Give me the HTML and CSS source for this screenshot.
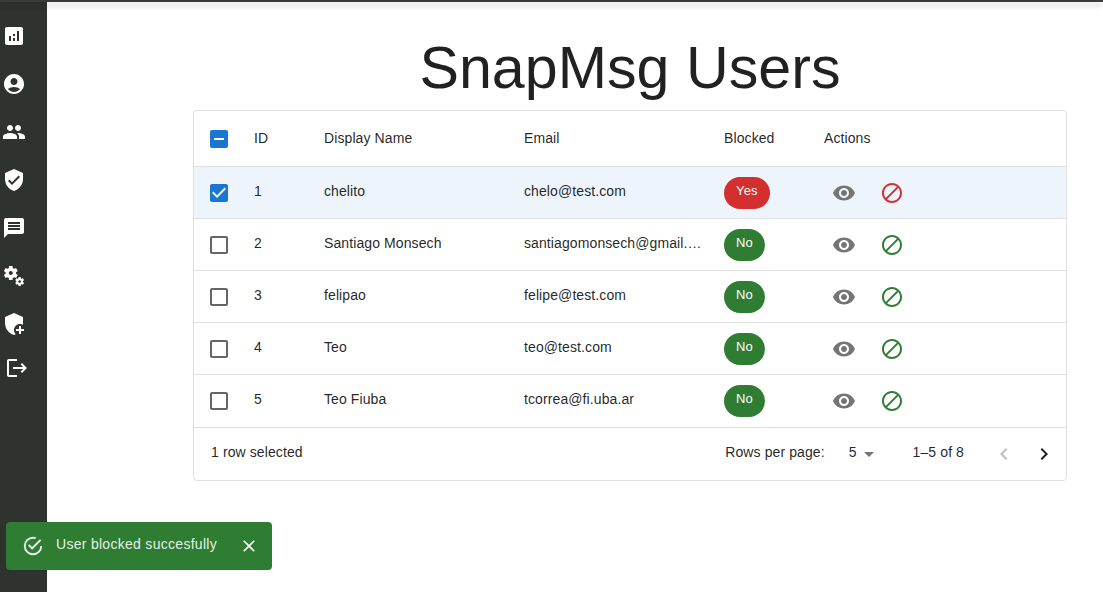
FILE: index.html
```html
<!DOCTYPE html>
<html lang="en">
<head>
<meta charset="utf-8">
<title>SnapMsg Users</title>
<link rel="stylesheet" href="styles.css">
</head>
<body>
<div class="topbar"></div>
<div class="app">
  <nav class="sidebar">
    <svg class="nav-icon" viewBox="0 0 24 24"><path d="M19 3H5c-1.1 0-2 .9-2 2v14c0 1.1.9 2 2 2h14c1.1 0 2-.9 2-2V5c0-1.1-.9-2-2-2zM9 17H7v-5h2v5zm4 0h-2v-3h2v3zm0-5h-2v-2h2v2zm4 5h-2V7h2v10z"/></svg>
    <svg class="nav-icon" viewBox="0 0 24 24"><path d="M12 2C6.48 2 2 6.48 2 12s4.48 10 10 10 10-4.48 10-10S17.52 2 12 2zm0 4c1.93 0 3.5 1.57 3.5 3.5S13.93 13 12 13s-3.5-1.57-3.5-3.5S10.07 6 12 6zm0 14c-2.03 0-4.43-.82-6.14-2.88C7.55 15.8 9.68 15 12 15s4.45.8 6.14 2.12C16.43 19.18 14.03 20 12 20z"/></svg>
    <svg class="nav-icon" viewBox="0 0 24 24"><path d="M16 11c1.66 0 2.99-1.34 2.99-3S17.66 5 16 5c-1.66 0-3 1.34-3 3s1.34 3 3 3zm-8 0c1.66 0 2.99-1.34 2.99-3S9.66 5 8 5C6.34 5 5 6.34 5 8s1.34 3 3 3zm0 2c-2.33 0-7 1.17-7 3.5V19h14v-2.5c0-2.33-4.67-3.5-7-3.5zm8 0c-.29 0-.62.02-.97.05 1.16.84 1.97 1.97 1.97 3.45V19h6v-2.5c0-2.33-4.67-3.5-7-3.5z"/></svg>
    <svg class="nav-icon" viewBox="0 0 24 24"><path d="M12 1 3 5v6c0 5.55 3.84 10.74 9 12 5.16-1.26 9-6.45 9-12V5l-9-4zm-2 16-4-4 1.41-1.41L10 14.17l6.59-6.59L18 9l-8 8z"/></svg>
    <svg class="nav-icon" viewBox="0 0 24 24"><path d="M20 2H4c-1.1 0-1.99.9-1.99 2L2 22l4-4h14c1.1 0 2-.9 2-2V4c0-1.1-.9-2-2-2zm-2 12H6v-2h12v2zm0-3H6V9h12v2zm0-3H6V6h12v2z"/></svg>
    <svg class="nav-icon" viewBox="0 0 24 24"><path d="M14.17 13.71l1.4-2.42c.09-.15.05-.34-.08-.45l-1.48-1.16c.03-.22.05-.45.05-.68s-.02-.46-.05-.69l1.48-1.16c.13-.11.17-.3.08-.45l-1.4-2.42c-.09-.15-.27-.21-.43-.15l-1.74.7c-.36-.28-.75-.51-1.18-.69l-.26-1.85c-.03-.17-.18-.3-.35-.3H7.41c-.17 0-.32.13-.35.3L6.8 4.15c-.42.18-.82.41-1.18.69l-1.74-.7c-.16-.06-.34 0-.43.15l-1.4 2.42c-.09.15-.05.34.08.45l1.48 1.16c-.03.22-.05.45-.05.68s.02.46.05.69l-1.48 1.16c-.13.11-.17.3-.08.45l1.4 2.42c.09.15.27.21.43.15l1.74-.7c.36.28.75.51 1.18.69l.26 1.85c.03.17.18.3.35.3h2.8c.17 0 .32-.13.35-.3l.26-1.85c.42-.18.82-.41 1.18-.69l1.74.7c.16.06.34 0 .43-.15zM8.81 11c-1.1 0-2-.9-2-2s.9-2 2-2 2 .9 2 2-.9 2-2 2z"/><path d="M21.92 18.67l-.96-.74c.02-.14.04-.29.04-.44 0-.15-.01-.3-.04-.44l.95-.74c.08-.07.11-.19.05-.29l-.9-1.55c-.05-.1-.17-.13-.28-.1l-1.11.45c-.23-.18-.48-.33-.76-.44l-.17-1.18c-.01-.12-.11-.2-.21-.2h-1.79c-.11 0-.21.08-.22.19l-.17 1.18c-.27.12-.53.26-.76.44l-1.11-.45c-.1-.04-.22 0-.28.1l-.9 1.55c-.05.1-.04.22.05.29l.95.74c-.02.14-.03.29-.03.44 0 .15.01.3.03.44l-.95.74c-.08.07-.11.19-.05.29l.9 1.55c.05.1.17.13.28.1l1.11-.45c.23.18.48.33.76.44l.17 1.18c.02.11.11.19.22.19h1.79c.11 0 .21-.08.22-.19l.17-1.18c.27-.12.53-.26.75-.44l1.12.45c.1.04.22 0 .28-.1l.9-1.55c.06-.09.03-.21-.05-.28zm-4.29.16c-.74 0-1.35-.6-1.35-1.35 0-.74.6-1.35 1.35-1.35s1.35.6 1.35 1.35c0 .74-.61 1.35-1.35 1.35z"/></svg>
    <svg class="nav-icon" viewBox="0 0 24 24"><path d="M12 1 3 5v6c0 5.55 3.84 10.74 9 12 .65-.16 1.27-.38 1.87-.65C12.74 21.22 12 19.7 12 18c0-3.31 2.69-6 6-6 1.08 0 2.09.29 2.96.79.03-.26.04-.53.04-.79V5l-9-4z"/><path d="M19 14h-2v3h-3v2h3v3h2v-3h3v-2h-3z"/></svg>
    <svg class="nav-icon nav-icon-logout" viewBox="0 0 24 24"><path d="M17 7l-1.41 1.41L18.17 11H8v2h10.17l-2.58 2.58L17 17l5-5zM4 5h8V3H4c-1.1 0-2 .9-2 2v14c0 1.1.9 2 2 2h8v-2H4V5z"/></svg>
  </nav>
  <main class="content">
    <h1 class="title">SnapMsg Users</h1>
    <section class="grid">
      <div class="row head">
        <div class="cell check"><svg class="box on" viewBox="0 0 24 24"><path d="M19 3H5c-1.1 0-2 .9-2 2v14c0 1.1.9 2 2 2h14c1.1 0 2-.9 2-2V5c0-1.1-.9-2-2-2zm-2 10H7v-2h10v2z"/></svg></div>
        <div class="cell">ID</div><div class="cell">Display Name</div><div class="cell">Email</div><div class="cell">Blocked</div><div class="cell">Actions</div>
      </div>
      <div class="row selected">
        <div class="cell check"><svg class="box on" viewBox="0 0 24 24"><path d="M19 3H5c-1.11 0-2 .9-2 2v14c0 1.1.89 2 2 2h14c1.11 0 2-.9 2-2V5c0-1.1-.89-2-2-2zm-9 14l-5-5 1.41-1.41L10 14.17l7.59-7.59L19 8l-9 9z"/></svg></div>
        <div class="cell">1</div><div class="cell">chelito</div><div class="cell"><span class="clip">chelo@test.com</span></div>
        <div class="cell"><span class="chip red">Yes</span></div>
        <div class="cell actions"><svg class="act eye" viewBox="0 0 24 24"><path d="M12 4.5C7 4.5 2.73 7.61 1 12c1.73 4.39 6 7.5 11 7.5s9.27-3.11 11-7.5c-1.73-4.39-6-7.5-11-7.5zM12 17c-2.76 0-5-2.24-5-5s2.24-5 5-5 5 2.24 5 5-2.24 5-5 5zm0-8c-1.66 0-3 1.34-3 3s1.34 3 3 3 3-1.34 3-3-1.34-3-3-3z"/></svg><svg class="act ban-red" viewBox="0 0 24 24"><path d="M12 2C6.48 2 2 6.48 2 12s4.48 10 10 10 10-4.48 10-10S17.52 2 12 2zM4 12c0-4.42 3.58-8 8-8 1.85 0 3.55.63 4.9 1.69L5.69 16.9C4.63 15.55 4 13.85 4 12zm8 8c-1.85 0-3.55-.63-4.9-1.69L18.31 7.1C19.37 8.45 20 10.15 20 12c0 4.42-3.58 8-8 8z"/></svg></div>
      </div>
      <div class="row">
        <div class="cell check"><svg class="box" viewBox="0 0 24 24"><path d="M19 5v14H5V5h14m0-2H5c-1.1 0-2 .9-2 2v14c0 1.1.9 2 2 2h14c1.1 0 2-.9 2-2V5c0-1.1-.9-2-2-2z"/></svg></div>
        <div class="cell">2</div><div class="cell">Santiago Monsech</div><div class="cell"><span class="clip">santiagomonsech@gmail.com</span></div>
        <div class="cell"><span class="chip green">No</span></div>
        <div class="cell actions"><svg class="act eye" viewBox="0 0 24 24"><path d="M12 4.5C7 4.5 2.73 7.61 1 12c1.73 4.39 6 7.5 11 7.5s9.27-3.11 11-7.5c-1.73-4.39-6-7.5-11-7.5zM12 17c-2.76 0-5-2.24-5-5s2.24-5 5-5 5 2.24 5 5-2.24 5-5 5zm0-8c-1.66 0-3 1.34-3 3s1.34 3 3 3 3-1.34 3-3-1.34-3-3-3z"/></svg><svg class="act ban-green" viewBox="0 0 24 24"><path d="M12 2C6.48 2 2 6.48 2 12s4.48 10 10 10 10-4.48 10-10S17.52 2 12 2zM4 12c0-4.42 3.58-8 8-8 1.85 0 3.55.63 4.9 1.69L5.69 16.9C4.63 15.55 4 13.85 4 12zm8 8c-1.85 0-3.55-.63-4.9-1.69L18.31 7.1C19.37 8.45 20 10.15 20 12c0 4.42-3.58 8-8 8z"/></svg></div>
      </div>
      <div class="row">
        <div class="cell check"><svg class="box" viewBox="0 0 24 24"><path d="M19 5v14H5V5h14m0-2H5c-1.1 0-2 .9-2 2v14c0 1.1.9 2 2 2h14c1.1 0 2-.9 2-2V5c0-1.1-.9-2-2-2z"/></svg></div>
        <div class="cell">3</div><div class="cell">felipao</div><div class="cell"><span class="clip">felipe@test.com</span></div>
        <div class="cell"><span class="chip green">No</span></div>
        <div class="cell actions"><svg class="act eye" viewBox="0 0 24 24"><path d="M12 4.5C7 4.5 2.73 7.61 1 12c1.73 4.39 6 7.5 11 7.5s9.27-3.11 11-7.5c-1.73-4.39-6-7.5-11-7.5zM12 17c-2.76 0-5-2.24-5-5s2.24-5 5-5 5 2.24 5 5-2.24 5-5 5zm0-8c-1.66 0-3 1.34-3 3s1.34 3 3 3 3-1.34 3-3-1.34-3-3-3z"/></svg><svg class="act ban-green" viewBox="0 0 24 24"><path d="M12 2C6.48 2 2 6.48 2 12s4.48 10 10 10 10-4.48 10-10S17.52 2 12 2zM4 12c0-4.42 3.58-8 8-8 1.85 0 3.55.63 4.9 1.69L5.69 16.9C4.63 15.55 4 13.85 4 12zm8 8c-1.85 0-3.55-.63-4.9-1.69L18.31 7.1C19.37 8.45 20 10.15 20 12c0 4.42-3.58 8-8 8z"/></svg></div>
      </div>
      <div class="row">
        <div class="cell check"><svg class="box" viewBox="0 0 24 24"><path d="M19 5v14H5V5h14m0-2H5c-1.1 0-2 .9-2 2v14c0 1.1.9 2 2 2h14c1.1 0 2-.9 2-2V5c0-1.1-.9-2-2-2z"/></svg></div>
        <div class="cell">4</div><div class="cell">Teo</div><div class="cell"><span class="clip">teo@test.com</span></div>
        <div class="cell"><span class="chip green">No</span></div>
        <div class="cell actions"><svg class="act eye" viewBox="0 0 24 24"><path d="M12 4.5C7 4.5 2.73 7.61 1 12c1.73 4.39 6 7.5 11 7.5s9.27-3.11 11-7.5c-1.73-4.39-6-7.5-11-7.5zM12 17c-2.76 0-5-2.24-5-5s2.24-5 5-5 5 2.24 5 5-2.24 5-5 5zm0-8c-1.66 0-3 1.34-3 3s1.34 3 3 3 3-1.34 3-3-1.34-3-3-3z"/></svg><svg class="act ban-green" viewBox="0 0 24 24"><path d="M12 2C6.48 2 2 6.48 2 12s4.48 10 10 10 10-4.48 10-10S17.52 2 12 2zM4 12c0-4.42 3.58-8 8-8 1.85 0 3.55.63 4.9 1.69L5.69 16.9C4.63 15.55 4 13.85 4 12zm8 8c-1.85 0-3.55-.63-4.9-1.69L18.31 7.1C19.37 8.45 20 10.15 20 12c0 4.42-3.58 8-8 8z"/></svg></div>
      </div>
      <div class="row row-last">
        <div class="cell check"><svg class="box" viewBox="0 0 24 24"><path d="M19 5v14H5V5h14m0-2H5c-1.1 0-2 .9-2 2v14c0 1.1.9 2 2 2h14c1.1 0 2-.9 2-2V5c0-1.1-.9-2-2-2z"/></svg></div>
        <div class="cell">5</div><div class="cell">Teo Fiuba</div><div class="cell"><span class="clip">tcorrea@fi.uba.ar</span></div>
        <div class="cell"><span class="chip green">No</span></div>
        <div class="cell actions"><svg class="act eye" viewBox="0 0 24 24"><path d="M12 4.5C7 4.5 2.73 7.61 1 12c1.73 4.39 6 7.5 11 7.5s9.27-3.11 11-7.5c-1.73-4.39-6-7.5-11-7.5zM12 17c-2.76 0-5-2.24-5-5s2.24-5 5-5 5 2.24 5 5-2.24 5-5 5zm0-8c-1.66 0-3 1.34-3 3s1.34 3 3 3 3-1.34 3-3-1.34-3-3-3z"/></svg><svg class="act ban-green" viewBox="0 0 24 24"><path d="M12 2C6.48 2 2 6.48 2 12s4.48 10 10 10 10-4.48 10-10S17.52 2 12 2zM4 12c0-4.42 3.58-8 8-8 1.85 0 3.55.63 4.9 1.69L5.69 16.9C4.63 15.55 4 13.85 4 12zm8 8c-1.85 0-3.55-.63-4.9-1.69L18.31 7.1C19.37 8.45 20 10.15 20 12c0 4.42-3.58 8-8 8z"/></svg></div>
      </div>
      <footer class="foot">
        <span class="selected-count">1 row selected</span>
        <div class="pager">
          <span class="rows-label">Rows per page:</span>
          <span class="rows-value">5</span>
          <svg class="pager-caret" viewBox="0 0 24 24"><path d="M7 10l5 5 5-5z"/></svg>
          <span class="range">1–5 of 8</span>
          <svg class="page-btn disabled" viewBox="0 0 24 24"><path d="M15.41 7.41 14 6l-6 6 6 6 1.41-1.41L10.83 12z"/></svg>
          <svg class="page-btn" viewBox="0 0 24 24"><path d="M10 6 8.59 7.41 13.17 12l-4.58 4.59L10 18l6-6z"/></svg>
        </div>
      </footer>
    </section>
  </main>
</div>
<div class="snackbar">
  <svg class="snack-icon" viewBox="0 0 24 24"><path d="M20,12A8,8 0 0,1 12,20A8,8 0 0,1 4,12A8,8 0 0,1 12,4C12.76,4 13.5,4.11 14.2,4.31L15.77,2.74C14.61,2.26 13.34,2 12,2A10,10 0 0,0 2,12A10,10 0 0,0 12,22A10,10 0 0,0 22,12M7.91,10.08L6.5,11.5L11,16L21,6L19.59,4.58L11,13.17L7.91,10.08Z"/></svg>
  <span class="snack-text">User blocked succesfully</span>
  <svg class="snack-close" viewBox="0 0 24 24"><path d="M19 6.41 17.59 5 12 10.59 6.41 5 5 6.41 10.59 12 5 17.59 6.41 19 12 13.41 17.59 19 19 17.59 13.41 12z"/></svg>
</div>
</body>
</html>
```
FILE: styles.css
```css
* { box-sizing: border-box; }
html, body { margin: 0; height: 100%; overflow: hidden; }
body {
  background: #fff;
  font-family: "Liberation Sans", Arial, sans-serif;
  font-size: 14px;
  letter-spacing: .1px;
  color: rgba(0, 0, 0, .87);
}
.topbar {
  position: relative;
  z-index: 2;
  height: 2px;
  background: #3b3d3c;
  box-shadow: 0 2px 4px -1px rgba(0, 0, 0, .2), 0 4px 5px rgba(0, 0, 0, .14), 0 1px 10px rgba(0, 0, 0, .12);
}
.app { display: flex; height: 590px; }
.sidebar {
  width: 47px;
  flex: none;
  background: #2e3330;
  display: flex;
  flex-direction: column;
  align-items: flex-start;
  gap: 24px;
  padding: 22px 0 0 2px;
}
.nav-icon { width: 24px; height: 24px; fill: #fff; flex: none; }
.nav-icon-logout { margin: -4px 0 0 3px; }
.content { margin-left: 146px; width: 874px; }
.title {
  margin: 0;
  height: 108px;
  padding-top: 26px;
  text-align: center;
  font-weight: 400;
  font-size: 59.2px;
  letter-spacing: 0;
  line-height: 80px;
  color: rgba(0, 0, 0, .87);
}
.grid {
  border: 1px solid #e0e0e0;
  border-radius: 4px;
  height: 371px;
}
.row {
  display: grid;
  grid-template-columns: 50px 70px 200px 200px 100px 1fr;
  height: 52px;
  border-bottom: 1px solid #e0e0e0;
}
.head { height: 56px; }
.row-last { height: 53px; padding-bottom: 1px; }
.selected { background: #edf4fb; }
.cell {
  display: flex;
  align-items: center;
  padding: 0 10px 3px;
  min-width: 0;
}
.head .cell { padding-bottom: 1px; }
.row .check { padding: 1px 0 0 13px; }
.box { width: 24px; height: 24px; fill: #666; flex: none; }
.box.on { fill: #1976d2; }
.clip { overflow: hidden; white-space: nowrap; text-overflow: ellipsis; }
.chip {
  display: block;
  height: 32px;
  border-radius: 16px;
  padding: 6px 12px 0;
  margin-top: 3px;
  font-size: 13px;
  letter-spacing: .2px;
  line-height: 16px;
  color: #fff;
}
.red { background: #d32f2f; }
.green { background: #2e7d32; }
.actions { gap: 24px; padding: 1px 0 0 18px; }
.act { width: 24px; height: 24px; flex: none; }
.eye { fill: #757575; }
.ban-red { fill: #d32f2f; }
.ban-green { fill: #2e7d32; }
.foot {
  display: flex;
  justify-content: space-between;
  align-items: center;
  height: 52px;
  padding: 0 2px 0 17px;
}
.selected-count { margin-bottom: 4px; }
.pager { display: flex; align-items: center; }
.rows-label { margin-right: 24px; margin-bottom: 4px; }
.rows-value { margin-bottom: 4px; }
.pager-caret { width: 24px; height: 24px; fill: #757575; }
.range { margin: 0 20px 4px 32px; }
.page-btn { width: 24px; height: 24px; margin: 0 8px; fill: rgba(0, 0, 0, .87); }
.page-btn.disabled { fill: rgba(0, 0, 0, .26); }
.snackbar {
  position: fixed;
  left: 6px;
  top: 522px;
  width: 266px;
  height: 48px;
  display: flex;
  align-items: center;
  background: #2e7d32;
  border-radius: 4px;
  color: #fff;
  padding: 0 0 0 16px;
}
.snack-icon { width: 22px; height: 22px; fill: rgba(255, 255, 255, .9); flex: none; }
.snack-text { margin: 0 0 4px 12px; width: 176px; flex: none; white-space: nowrap; letter-spacing: .29px; color: rgba(255,255,255,.9); }
.snack-close { width: 20px; height: 20px; fill: #fff; flex: none; margin-left: 7px; }
```
